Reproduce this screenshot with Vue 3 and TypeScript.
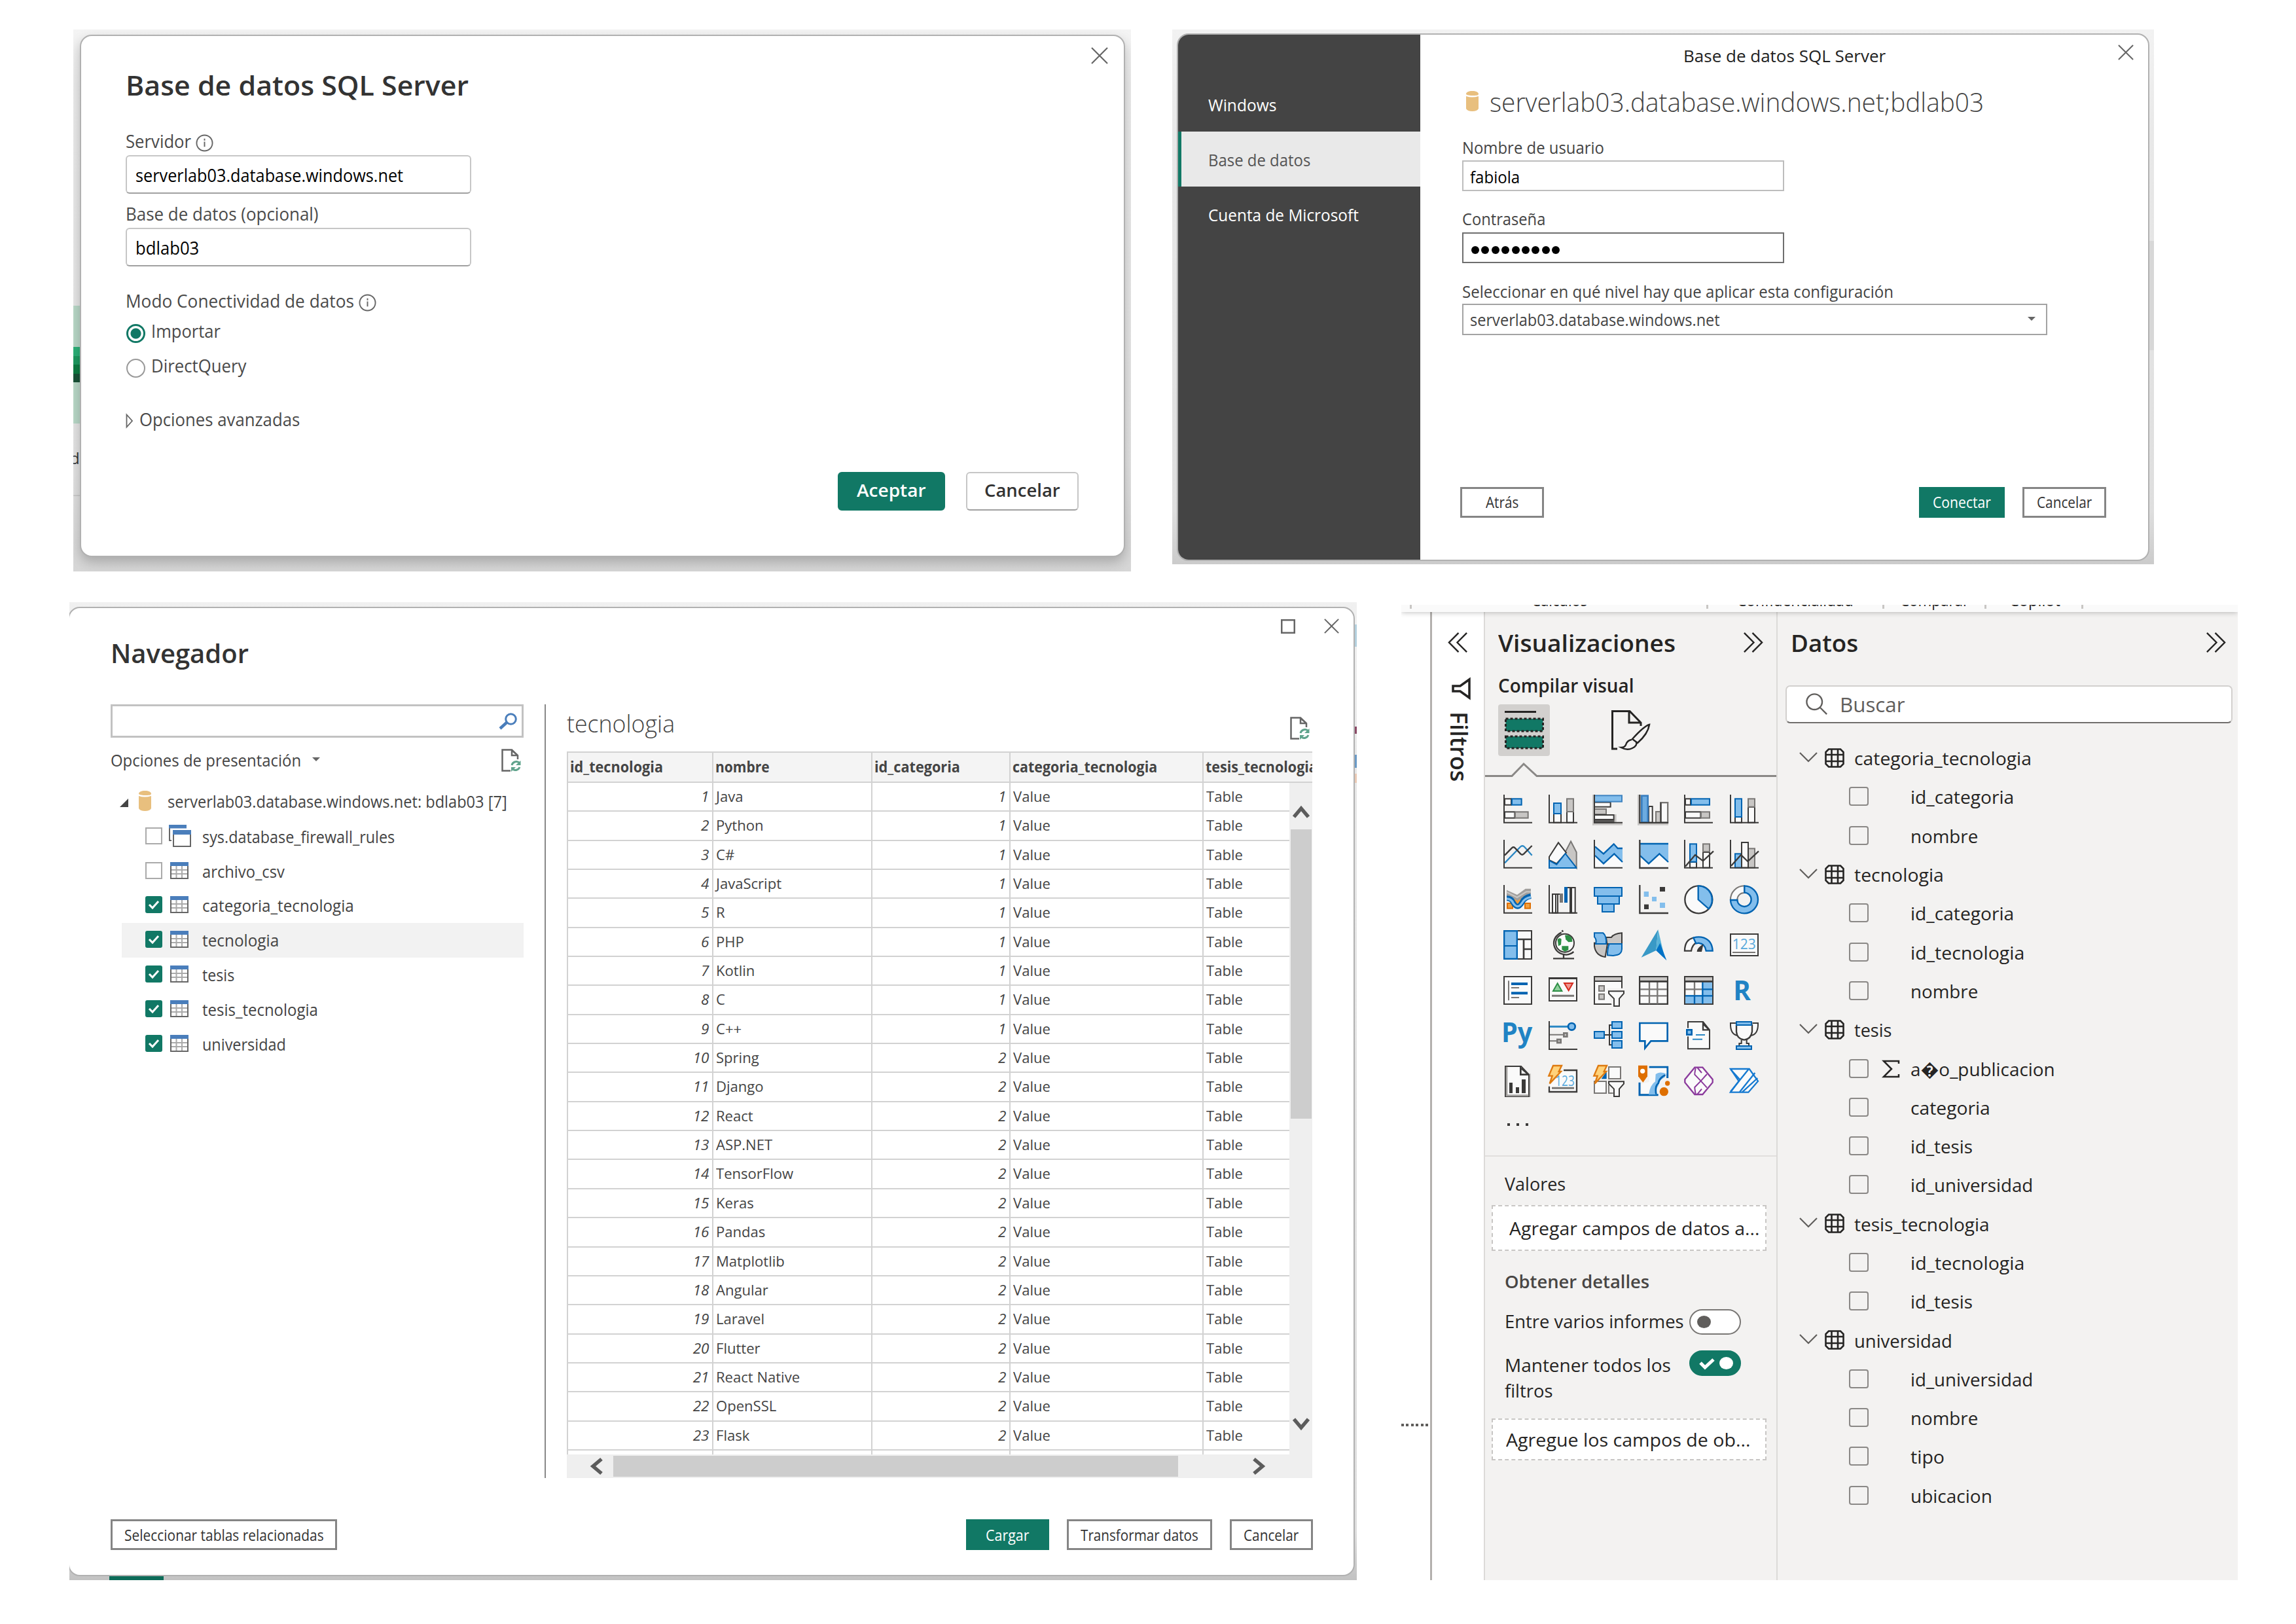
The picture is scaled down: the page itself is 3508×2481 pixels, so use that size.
<script setup lang="ts">
import type { Directive } from 'vue'

// Stretches a label horizontally so that it takes exactly the given width.
const vFit: Directive<HTMLElement, number> = {
  mounted(el, { value }) {
    const natural = el.offsetWidth
    if (!natural || !value) return
    el.style.transform = `scaleX(${(value / natural).toFixed(4)})`
    el.style.marginRight = `${(value - natural).toFixed(1)}px`
  },
}

const K = '#3b3a39'
const B = '#0063b1'
const L = '#83beec'
const G = '#c8c6c4'
const S = '#797775'
const W = '#fafafa'
const O = '#de6f00'

const box = (x1: number, y1: number, x2: number, y2: number, fill: string, stroke: string, sw = 6) =>
  `<rect x="${x1 + sw / 2}" y="${y1 + sw / 2}" width="${x2 - x1 - sw}" height="${y2 - y1 - sw}" fill="${fill}" stroke="${stroke}" stroke-width="${sw}"/>`
const solid = (x1: number, y1: number, x2: number, y2: number, fill: string) =>
  `<rect x="${x1}" y="${y1}" width="${x2 - x1}" height="${y2 - y1}" fill="${fill}"/>`
const line = (d: string, stroke: string, sw = 6, fill = 'none') =>
  `<path d="${d}" fill="${fill}" stroke="${stroke}" stroke-width="${sw}"/>`
const area = (d: string, fill: string) => `<path d="${d}" fill="${fill}"/>`
const axes = line('M6 3V131.5H135', K)
const shift = (s: string) => `<g transform="translate(3 0)">${s}</g>`
const num = (x: number, y: number, size: number, len: number) =>
  `<text x="${x}" y="${y}" font-size="${size}" textLength="${len}" lengthAdjust="spacingAndGlyphs" fill="#58a9dc" font-family="Open Sans, Noto Sans, sans-serif">123</text>`
const bolt =
  area('M22 2H66L54 28H66L10 87L20 52H4L22 2Z', '#ffd27a') + line('M24 3H63L50 30H60L8 85L20 50H4L24 3Z', '#de7a10', 7)
const funnel = line('M72 76H141V86L120 110V144H96V110L72 86Z', K, 6, W)

const icons: string[] = [
  // stacked and clustered bars
  box(6, 19, 42, 53, W, K) + box(39, 19, 89, 53, L, B) + box(6, 79, 58, 113, W, K) + box(54, 79, 119, 113, G, S) + axes,
  box(24, 87, 63, 134, W, K) + box(24, 39, 63, 93, L, B) + box(84, 78, 120, 134, W, K) + box(84, 19, 120, 84, G, S) + axes,
  solid(-3, 3, 3, 143, G) + solid(-3, 134, 135, 143, G) + box(3, 35, 83, 62, W, K) + box(3, 66, 63, 96, G, S) + solid(98, 93, 107, 134, G) + box(3, 93, 98, 120, W, K) + solid(3, 119, 98, 134, '#5a5958') + box(3, 4, 135, 38, L, '#3f84c1') + axes,
  solid(-3, 3, 3, 143, G) + solid(-3, 134, 138, 143, G) + box(45, 54, 68, 134, W, K) + box(78, 78, 105, 134, G, S) + box(99, 36, 139, 134, W, S, 7) + line('M104 134V40', K) + box(12, 4, 48, 134, '#6cabe0', '#3a7ebf', 8) + line('M7 3V131.5H138', K, 7),
  box(6, 19, 36, 53, W, K) + box(33, 19, 123, 53, L, B) + box(6, 79, 82, 113, W, K) + box(78, 79, 123, 113, G, S) + axes,
  shift(box(24, 102, 60, 134, W, K) + box(24, 19, 60, 108, L, B) + box(84, 57, 120, 134, W, K) + box(84, 19, 120, 62, G, S) + axes),
  // lines, areas and combos
  line('M9 109L80 36Q90 26 100 36L134 74', '#2b88c4', 7) + line('M9 74L42 40Q49 34 56 40L82 68Q89 74 96 68L134 30', K, 7) + axes,
  line('M105 10L131 60V132L76 66Z', S, 6, G) + line('M6 81L48 16L84 62L40 112L6 96Z', K, 6, W) + line('M6 98L40 116L80 66L130 130V132H6Z', B, 6, L),
  area('M9 75L48 112L97 67L135 105V130H9Z', W) + area('M9 34L48 67L95 22L113 42H135V105L97 67L48 112L9 75Z', L) + line('M9 34L48 67L95 22L113 42H135M9 75L48 112L97 67L135 105', B, 7) + axes,
  area('M9 75L48 112L97 67L138 105V130H9Z', W) + area('M9 20H138V105L97 67L48 112L9 78Z', L) + line('M9 21H138M9 76L48 112L97 67L138 105', B, 7) + line('M7 3V132H138', K, 7),
  box(27, 102, 63, 134, W, K) + box(27, 19, 63, 107, L, B) + box(87, 57, 123, 134, W, K) + box(87, 19, 123, 60, G, S) + line('M9 125L54 72L90 100L138 55', K, 7) + axes,
  shift(box(24, 64, 60, 134, L, B) + box(84, 40, 120, 134, G, S) + box(54, 12, 90, 134, W, K) + line('M9 122L54 72L85 102L135 55', K, 7) + axes),
  // ribbon, waterfall, funnel, scatter, pie, ring
  box(18, 84, 48, 113, '#f0a040', O) + box(99, 84, 129, 113, '#f0a040', O) + solid(50, 62, 86, 90, '#f0a040') + area('M18 26L66 48L104 20H129V46L68 74L18 54Z', '#a19f9d') + line('M18 36L66 60L108 34H129', G, 7) + line('M18 64Q40 64 48 84Q68 118 88 84Q98 60 129 54', B, 24) + line('M18 66Q40 66 48 86Q68 116 88 86Q98 64 129 58', L, 10) + axes,
  box(18, 42, 48, 134, W, K) + line('M45 45H58M36 45V134', K) + solid(54, 42, 69, 84, S) + box(99, 12, 128, 134, W, K) + line('M90 15H105M108 15V132', K) + solid(75, 12, 90, 84, B) + axes,
  box(3, 12, 135, 57, L, B) + box(18, 51, 123, 93, L, B) + box(39, 87, 99, 129, L, B),
  solid(99, 12, 123, 33, K) + solid(26, 33, 48, 57, L) + solid(63, 57, 84, 78, L) + solid(99, 84, 123, 108, L) + solid(27, 92, 48, 114, K) + line('M7 3V132H138', K, 7),
  `<circle cx="70" cy="70" r="63" fill="${W}" stroke="${K}" stroke-width="7"/>` + line('M68 70V7A63 63 0 0 1 116 112Z', B, 7, L),
  shift(line('M69 7A63 63 0 0 0 6 72H37A31 31 0 0 1 69 39Z', S, 6, W) + line('M70 7A63 63 0 1 1 6 72H37A32 32 0 1 0 70 38Z', B, 7, L)),
  // treemap, maps, gauge, card
  box(63, 3, 135, 138, W, K) + line('M66 45H132M96 45V136M96 90H132', K, 8) + box(3, 3, 69, 138, L, B, 7) + line('M3 75H69', B),
  `<circle cx="78" cy="62" r="42" fill="${W}" stroke="${K}" stroke-width="6"/>` + area('M78 26Q100 22 110 40L112 56L94 58L82 46Z', '#2d8f45') + area('M44 46Q54 34 62 44L60 70L48 76Z', '#2d8f45') + area('M64 76H94V94L78 102L64 92Z', '#2d8f45') + line('M64 4L70 10M62 14Q22 34 28 72Q38 112 84 116Q104 114 118 102M72 116V132M24 133H120', K, 7),
  line('M6 62V76Q12 120 56 126L66 66Z', K, 6, G) + line('M60 36H84Q96 18 132 16V66H64Z', K, 6, G) + line('M6 16H46Q62 28 60 66H12Q18 46 6 34Z', B, 6, L) + line('M74 66H132V90Q130 112 112 116L92 120L66 118Q66 84 74 66Z', B, 6, L),
  area('M91 0L14 128L82 96Z', '#3999c6') + area('M91 0L82 96L122 132Z', '#59b4d9') + area('M82 96L100 62L130 142Z', '#0072c6'),
  line('M6 98Q6 46 48 38L60 60Q40 70 36 98Z', K, 7, W) + line('M46 38Q70 30 94 38Q132 52 134 98H104Q100 66 70 62L58 64Z', B, 7, L) + area('M92 66L84 102H62Q60 86 92 66Z', K),
  shift(box(3, 18, 135, 123, W, K) + num(14, 91, 68, 108) + line('M15 105H120', S)),
  // text box, KPI, slicer, table, matrix
  box(3, 6, 135, 138, W, K) + line('M27 28V118M39 60H75M39 105H75', S) + line('M39 42H114M39 85H114', B, 12),
  box(3, 12, 135, 123, W, K) + line('M6 17H132', K, 8) + line('M44 40L64 75H24Z', '#2d8f45', 6, '#8fcf9c') + line('M75 39H114L95 73Z', '#d42a1e', 6, '#f0948e') + line('M18 97H120', S, 9),
  box(3, 6, 135, 138, W, K) + solid(9, 12, 129, 27, G) + line('M3 30H135', K) + box(24, 48, 54, 78, G, S) + box(24, 86, 54, 116, G, S) + area('M62 62H140V140H86Z', '#f3f2f1') + funnel,
  box(3, 6, 138, 138, W, K, 7) + line('M51 30V134M88 30V134M9 67H132M9 97H132', S, 7) + solid(9, 12, 132, 27, G) + line('M3 31H138', K, 8),
  box(3, 6, 138, 138, W, K, 7) + solid(87, 33, 132, 132, L) + solid(9, 93, 132, 132, L) + line('M51 34V96M9 67H88', S, 7) + line('M51 94V134M88 34V134M88 67H134M9 97H134', B, 7) + solid(9, 12, 132, 27, G) + line('M3 31H138', K, 8),
  `<text x="22" y="116" font-size="125" font-weight="700" fill="#2083c4" textLength="80" lengthAdjust="spacingAndGlyphs" font-family="Open Sans, Noto Sans, sans-serif">R</text>`,
  // python, influencers, decomposition, Q&A, narrative, goals
  `<text x="-6" y="101" font-size="125" font-weight="700" fill="#2083c4" textLength="142" lengthAdjust="spacingAndGlyphs" font-family="Open Sans, Noto Sans, sans-serif">Py</text>`,
  line('M9 31H90', '#2b88c4', 9) + line('M9 68H72M9 97H45', S) + `<circle cx="109" cy="31" r="16" fill="${L}" stroke="${B}" stroke-width="8"/>` + box(69, 57, 92, 81, G, S, 8) + box(39, 86, 63, 109, G, S, 8) + line('M6 6V135H135', K),
  line('M54 69H86M90 24H75V115H90', K) + box(3, 51, 54, 87, L, B) + box(84, 6, 135, 42, L, B) + box(84, 51, 135, 87, L, B) + box(84, 93, 135, 132, L, B),
  line('M7 15H134V97H58L31 130V97H7Z', B, 8, W),
  line('M21 9H90L120 46V133H21Z', K, 6, W) + line('M90 9V46H120M92 20L116 44', K, 7) + solid(10, 38, 46, 76, W) + box(12, 42, 42, 72, L, B, 8) + line('M57 69H99M42 89H87', '#2b88c4'),
  shift(line('M30 15H6Q4 66 38 72M106 15H132Q134 66 100 72', K, 6, W) + line('M33 20V54Q36 88 69 92Q100 88 105 54V20', K, 7, W) + line('M56 92V108H46V120M80 92V108H90V120', K, 6) + box(30, 6, 105, 27, L, B) + box(30, 117, 105, 138, L, B)),
  // paginated report, new card, new slicer, azure map, apps, automate
  solid(120, 40, 129, 147, G) + line('M12 6H84L120 44V144H12Z', K, 6, W) + line('M18 8V140H118', '#a19f9d', 8) + line('M82 6V44H120M86 16L116 42', K, 8) + solid(30, 81, 45, 129, K) + solid(60, 102, 75, 129, K) + solid(87, 66, 105, 129, K),
  line('M72 24H132V123H6V98', K, 7, W) + num(34, 95, 68, 88) + line('M18 106H120', S, 9) + bolt,
  box(69, 6, 129, 66, W, S) + box(3, 72, 63, 132, W, S) + area('M62 28V64H38Z', B) + line('M72 90V129H92', S) + funnel + bolt,
  line('M50 10H134V60M6 80V137H92', B, 9) + area('M14 86V128H56Q54 100 76 82Q80 50 96 34L130 40V14H50V78Z', W) + area('M80 42Q98 28 126 40L122 56Q96 66 92 96Q80 108 84 136H48Q54 92 78 76Z', L) + line('M124 46Q96 60 92 84Q76 96 82 134', B, 8) + area('M0 2H42V52L22 80L0 52Z', O) + `<circle cx="20" cy="28" r="11" fill="#fff"/><circle cx="118" cy="122" r="20" fill="${O}"/><circle cx="134" cy="84" r="11" fill="${O}"/>`,
  line('M52 11L7 66V80L52 135H88L134 80V66L88 11Z', '#8b3a9c', 7, W) + line('M52 38L56 14M52 38V44L80 73L108 104M52 108L56 132M52 108V102L80 73L108 42M64 12L84 36M64 134L84 110', '#8b3a9c', 6),
  shift(line('M6 18H92L132 74L88 125H6L44 74Z', '#1579d0', 7, W) + line('M8 22L48 66M6 122L88 20M48 124L118 36M60 124L130 60', '#1579d0', 7)),
]

interface NavItem { name: string; w: number; checked: boolean; view?: boolean; active?: boolean }
const navItems: NavItem[] = [
  { name: 'sys.database_firewall_rules', w: 294, checked: false, view: true },
  { name: 'archivo_csv', w: 126, checked: false },
  { name: 'categoria_tecnologia', w: 232, checked: true },
  { name: 'tecnologia', w: 117, checked: true, active: true },
  { name: 'tesis', w: 49, checked: true },
  { name: 'tesis_tecnologia', w: 177, checked: true },
  { name: 'universidad', w: 128, checked: true },
]

const techs = ['Java', 'Python', 'C#', 'JavaScript', 'R', 'PHP', 'Kotlin', 'C', 'C++', 'Spring', 'Django', 'React', 'ASP.NET',
  'TensorFlow', 'Keras', 'Pandas', 'Matplotlib', 'Angular', 'Laravel', 'Flutter', 'React Native', 'OpenSSL', 'Flask']
const rows = techs.map((name, i) => ({ id: i + 1, name, cat: i < 9 ? 1 : 2 }))

interface Field { name: string; w: number; table?: boolean; sum?: boolean }
const fields: Field[] = [
  { name: 'categoria_tecnologia', w: 271, table: true },
  { name: 'id_categoria', w: 158 },
  { name: 'nombre', w: 103 },
  { name: 'tecnologia', w: 137, table: true },
  { name: 'id_categoria', w: 158 },
  { name: 'id_tecnologia', w: 174 },
  { name: 'nombre', w: 103 },
  { name: 'tesis', w: 57, table: true },
  { name: 'a\uFFFDo_publicacion', w: 221, sum: true },
  { name: 'categoria', w: 122 },
  { name: 'id_tesis', w: 95 },
  { name: 'id_universidad', w: 187 },
  { name: 'tesis_tecnologia', w: 207, table: true },
  { name: 'id_tecnologia', w: 174 },
  { name: 'id_tesis', w: 95 },
  { name: 'universidad', w: 150, table: true },
  { name: 'id_universidad', w: 187 },
  { name: 'nombre', w: 103 },
  { name: 'tipo', w: 52 },
  { name: 'ubicacion', w: 125 },
]
</script>

<template>
  <main class="desk">
    <!-- SQL Server connection -->
    <section class="shot shot-sql">
      <div class="under">
        <i class="u-light"></i><i class="u-g1"></i><i class="u-g2"></i><i class="u-g3"></i><i class="u-g4"></i><i class="u-light"></i>
        <span class="u-text">de</span>
      </div>
      <div class="dialog sql">
        <svg class="close" viewBox="0 0 26 26"><path d="M1 1L25 25M25 1L1 25" /></svg>
        <h1><span v-fit="524" class="t">Base de datos SQL Server</span></h1>
        <div class="label l1"><span v-fit="100" class="t">Servidor</span>
          <svg class="info" viewBox="0 0 28 28"><circle cx="14" cy="14" r="12.5" /><path d="M14 12V20M14 7V10" /></svg>
        </div>
        <div class="field"><span v-fit="409" class="t">serverlab03.database.windows.net</span></div>
        <div class="label l2"><span v-fit="295" class="t">Base de datos (opcional)</span></div>
        <div class="field f2"><span v-fit="97" class="t">bdlab03</span></div>
        <div class="label l3"><span v-fit="349" class="t">Modo Conectividad de datos</span>
          <svg class="info" viewBox="0 0 28 28"><circle cx="14" cy="14" r="12.5" /><path d="M14 12V20M14 7V10" /></svg>
        </div>
        <div class="label radio r1"><i class="dot on"></i><span v-fit="106" class="t">Importar</span></div>
        <div class="label radio r2"><i class="dot"></i><span v-fit="145" class="t">DirectQuery</span></div>
        <div class="label adv">
          <svg viewBox="0 0 12 22"><path d="M1.5 1.5V20.5L10 11Z" /></svg><span v-fit="245" class="t">Opciones avanzadas</span>
        </div>
        <div class="sql-actions">
          <button class="primary"><span v-fit="106" class="t">Aceptar</span></button>
          <button><span v-fit="116" class="t">Cancelar</span></button>
        </div>
      </div>
    </section>

    <!-- Credentials -->
    <section class="shot shot-cred">
      <i class="edge-band"></i>
      <div class="dialog cred">
        <nav>
          <a><span v-fit="104" class="t">Windows</span></a>
          <a class="sel"><span v-fit="156" class="t">Base de datos</span></a>
          <a><span v-fit="230" class="t">Cuenta de Microsoft</span></a>
        </nav>
        <div class="cred-body">
          <svg class="close" viewBox="0 0 26 26"><path d="M1 1L25 25M25 1L1 25" /></svg>
          <div class="cred-title"><span v-fit="309" class="t">Base de datos SQL Server</span></div>
          <div class="cred-head">
            <svg class="cyl" viewBox="0 0 19 31"><path d="M0 4.5C0 2 4 0 9.500 0S19 2 19 4.500S15 7 9.500 7S0 6 0 4.500ZM0 8Q9 11 19 8V27Q17 31 9.500 31T0 27Z" /></svg>
            <span v-fit="755" class="t">serverlab03.database.windows.net;bdlab03</span>
          </div>
          <div class="clabel c1"><span v-fit="217" class="t">Nombre de usuario</span></div>
          <div class="cinput"><span v-fit="76" class="t">fabiola</span></div>
          <div class="clabel c2"><span v-fit="127" class="t">Contraseña</span></div>
          <div class="cinput pass"><i v-for="n in 9" :key="n"></i></div>
          <div class="clabel c3"><span v-fit="659" class="t">Seleccionar en qué nivel hay que aplicar esta configuración</span></div>
          <div class="cselect"><span v-fit="382" class="t">serverlab03.database.windows.net</span><i class="caret"></i></div>
          <div class="cred-actions">
            <button class="sq"><span v-fit="50" class="t">Atrás</span></button>
            <span class="grow"></span>
            <button class="sq green"><span v-fit="89" class="t">Conectar</span></button>
            <button class="sq"><span v-fit="84" class="t">Cancelar</span></button>
          </div>
        </div>
      </div>
    </section>

    <!-- Navigator -->
    <section class="shot shot-nav">
      <i class="base-bar"></i>
      <i class="sliver s1"></i><i class="sliver s2"></i><i class="sliver s3"></i><i class="sliver s4"></i>
      <div class="dialog navi">
        <svg class="maxi" viewBox="0 0 22 22"><path d="M1.250 1.250H20.750V20.750H1.250Z" /></svg>
        <svg class="close" viewBox="0 0 26 26"><path d="M1 1L25 25M25 1L1 25" /></svg>
        <h1><span v-fit="211" class="t">Navegador</span></h1>
        <div class="navi-cols">
          <aside>
            <div class="nsearch">
              <svg viewBox="0 0 28 26"><circle cx="18.500" cy="9.500" r="7.800" fill="none" stroke="#4a7ebb" stroke-width="3" /><path d="M12.500 14.500L2 24" stroke="#4a7ebb" stroke-width="4.500" /></svg>
            </div>
            <div class="nopts">
              <span v-fit="291" class="t">Opciones de presentación</span><i class="caret"></i><span class="grow"></span>
              <svg class="refresh" viewBox="0 0 30 35"><path d="M14 33.500H1.500V1.500H16L25 10V16M16 1.500V10H25M18 4L24 9" fill="none" stroke="#666" stroke-width="2.500" /><path d="M16 25A7 7 0 0 1 27 21M28 28A7 7 0 0 1 18 31.500" fill="none" stroke="#5fa38c" stroke-width="3" /><path d="M29.500 18V25H22ZM15 35V28H22Z" fill="#5fa38c" /></svg>
            </div>
            <div class="nroot">
              <svg class="tri" viewBox="0 0 13 13"><path d="M13 0V13H0Z" fill="#444" /></svg>
              <svg class="cyl" viewBox="0 0 19 31"><path d="M0 4.500C0 2 4 0 9.500 0S19 2 19 4.500S15 7 9.500 7S0 6 0 4.500ZM0 8Q9 11 19 8V27Q17 31 9.500 31T0 27Z" /></svg>
              <span v-fit="519" class="t">serverlab03.database.windows.net: bdlab03 [7]</span>
            </div>
            <div v-for="it in navItems" :key="it.name" class="nrow" :class="{ active: it.active }">
              <i class="cb" :class="{ on: it.checked }"><svg v-if="it.checked" viewBox="0 0 26 26"><path d="M6 13L11 18L20 8" /></svg></i>
              <span class="nicon">
                <svg v-if="it.view" class="vw" width="34" height="34" viewBox="0 0 34 34"><path d="M1 0V24H5" fill="none" stroke="#666" stroke-width="2" /><rect width="27" height="5.500" fill="#4a7ebb" /><rect x="4" y="6" width="30" height="28" fill="#fff" /><rect x="7" y="9" width="26" height="24" fill="#fff" stroke="#666" stroke-width="2" /><rect x="6" y="8" width="28" height="7" fill="#4a7ebb" /></svg>
                <svg v-else width="28" height="26" viewBox="0 0 28 26"><rect x="1" y="1" width="26" height="24" fill="#fff" stroke="#666" stroke-width="2" /><path d="M9.500 6V24M18 6V24M2 12H26M2 18H26" stroke="#aaa" stroke-width="2" /><rect width="28" height="6" fill="#4a7ebb" /></svg>
              </span>
              <span v-fit="it.w" class="t">{{ it.name }}</span>
            </div>
          </aside>
          <div class="preview">
            <div class="phead">
              <span v-fit="165" class="t">tecnologia</span><span class="grow"></span>
              <svg class="refresh" viewBox="0 0 30 35"><path d="M14 33.500H1.500V1.500H16L25 10V16M16 1.500V10H25M18 4L24 9" fill="none" stroke="#666" stroke-width="2.500" /><path d="M16 25A7 7 0 0 1 27 21M28 28A7 7 0 0 1 18 31.500" fill="none" stroke="#5fa38c" stroke-width="3" /><path d="M29.500 18V25H22ZM15 35V28H22Z" fill="#5fa38c" /></svg>
            </div>
            <div class="thead">
              <b><span v-fit="142" class="t">id_tecnologia</span></b><b><span v-fit="83" class="t">nombre</span></b><b><span v-fit="131" class="t">id_categoria</span></b><b><span v-fit="221" class="t">categoria_tecnologia</span></b><b><span v-fit="171" class="t">tesis_tecnologia</span></b>
            </div>
            <div class="tmain">
              <div class="tbody">
                <div v-for="r in rows" :key="r.id" class="tr">
                  <span class="n">{{ r.id }}</span><span><em>{{ r.name }}</em></span><span class="n">{{ r.cat }}</span><span><em>Value</em></span><span><em>Table</em></span>
                </div>
                <div class="tr"><span></span><span></span><span></span><span></span><span></span></div>
              </div>
              <div class="vbar">
                <svg class="up" viewBox="0 0 24 20"><path d="M1 17L12 4L23 17" /></svg>
                <i class="vthumb"></i>
                <svg class="down" viewBox="0 0 24 20"><path d="M1 3L12 16L23 3" /></svg>
              </div>
            </div>
            <div class="hbar">
              <svg class="left" viewBox="0 0 20 24"><path d="M17 1L4 12L17 23" /></svg>
              <i class="hthumb"></i><span class="grow"></span>
              <svg class="right" viewBox="0 0 20 24"><path d="M3 1L16 12L3 23" /></svg>
            </div>
          </div>
        </div>
        <div class="navi-actions">
          <button class="sq b1"><span v-fit="305" class="t">Seleccionar tablas relacionadas</span></button>
          <span class="grow"></span>
          <button class="sq green b2"><span v-fit="66" class="t">Cargar</span></button>
          <button class="sq b3"><span v-fit="180" class="t">Transformar datos</span></button>
          <button class="sq b2"><span v-fit="84" class="t">Cancelar</span></button>
        </div>
      </div>
    </section>

    <!-- Report panes -->
    <section class="panes">
      <div class="ribbon">
        <i class="g0"></i><span v-fit="85" class="t">Cálculos</span><i class="g1"></i><span v-fit="178" class="t">Confidencialidad</span><i class="g2"></i><span v-fit="105" class="t">Comparar</span><i class="g3"></i><span v-fit="78" class="t">Copilot</span><i class="g4"></i>
      </div>
      <div class="pane-row">
        <div class="canvas"><i></i></div>
        <div class="filters">
          <svg class="chev2" viewBox="0 0 32 32"><path d="M17 1L2 16L17 31M30 1L15 16L30 31" /></svg>
          <svg class="funnel" viewBox="0 0 30 32"><path d="M27 2V30L13 20H2V12H13Z" /></svg>
          <span class="vert">Filtros</span>
        </div>
        <div class="viz">
          <div class="pane-title">
            <span v-fit="271" class="t">Visualizaciones</span><span class="grow"></span>
            <svg class="chev2" viewBox="0 0 32 32"><path d="M2 1L17 16L2 31M15 1L30 16L15 31" /></svg>
          </div>
          <div class="pane-sub"><span v-fit="207" class="t">Compilar visual</span></div>
          <div class="modes">
            <span class="mode on">
              <svg width="60" height="62" viewBox="0 0 60 62"><path d="M0 2.500H48" stroke="#252423" stroke-width="3" /><g fill="#117865" stroke="#252423" stroke-width="3" stroke-dasharray="4 3"><rect x="1.500" y="13" width="57" height="19" /><rect x="1.500" y="40" width="57" height="18" /></g></svg>
            </span>
            <svg class="fmt" width="62" height="62" viewBox="0 0 62 62" fill="none" stroke="#252423" stroke-width="3"><path d="M9 59H1.500V1.500H28L45 19V24M27 2V19H45" /><path d="M58 22Q50 24 32 44L40 50Q56 36 58 22ZM31 45Q24 46 22 53Q20 57 15 57Q24 62 32 58Q40 54 38 49" stroke-width="2.500" /></svg>
          </div>
          <svg class="notch" width="445" height="22" viewBox="0 0 445 22"><path d="M0 20.500H41L59 2L79 20.500H445" fill="none" stroke="#8a8886" stroke-width="3" /></svg>
          <div class="gallery">
            <svg v-for="(ic, i) in icons" :key="i" viewBox="0 0 150 150" v-html="ic"></svg>
          </div>
          <div class="more"><i></i><i></i><i></i></div>
          <div class="wells">
            <div class="wl w1"><span v-fit="93" class="t">Valores</span></div>
            <div class="drop d1"><span v-fit="382" class="t">Agregar campos de datos a...</span></div>
            <div class="wl w2"><span v-fit="221" class="t">Obtener detalles</span></div>
            <div class="wl w3"><span v-fit="274" class="t">Entre varios informes</span><i class="toggle"><b></b></i></div>
            <div class="wl w4">
              <div><span v-fit="254" class="t">Mantener todos los</span><br><span v-fit="73" class="t">filtros</span></div>
              <i class="toggle on"><svg width="24" height="18" viewBox="0 0 24 18"><path d="M2 8L9 15L22 3" fill="none" stroke="#fff" stroke-width="5" /></svg><b></b></i>
            </div>
            <div class="drop d2"><span v-fit="374" class="t">Agregue los campos de ob...</span></div>
          </div>
        </div>
        <div class="data">
          <div class="pane-title">
            <span v-fit="103" class="t">Datos</span><span class="grow"></span>
            <svg class="chev2" viewBox="0 0 32 32"><path d="M2 1L17 16L2 31M15 1L30 16L15 31" /></svg>
          </div>
          <div class="dsearch">
            <svg viewBox="0 0 36 36"><circle cx="14" cy="14" r="12.500" /><path d="M23 23L34 34" /></svg>
            <span v-fit="100" class="t">Buscar</span>
          </div>
          <div v-for="(f, i) in fields" :key="i" class="frow" :class="{ table: f.table }">
            <template v-if="f.table">
              <svg class="chev" viewBox="0 0 28 18"><path d="M1 2L14 15L27 2" /></svg>
              <svg class="grid" viewBox="0 0 30 30"><path d="M6 1.500H24L28.500 6V24L24 28.500H6L1.500 24V6ZM10.500 1V29M20 1V29M1 10H29M1 20H29" /></svg>
            </template>
            <template v-else>
              <i class="fcb"></i>
              <span class="sum"><svg v-if="f.sum" width="27" height="28" viewBox="0 0 27 28"><path d="M25 6V2H2L14 14L2 26H25V22" /></svg></span>
            </template>
            <span v-fit="f.w" class="t">{{ f.name }}</span>
          </div>
        </div>
      </div>
    </section>
  </main>
</template>

<style>
body { background: #fff; }
</style>

<style scoped>
* { box-sizing: border-box; }
.desk { position: relative; width: 3508px; height: 2481px; overflow: hidden; background: #fff; font-family: "Open Sans", "Noto Sans", "DejaVu Sans", sans-serif; color: #444; }
.t { display: inline-block; white-space: pre; transform-origin: 0 50%; flex: none; }
.grow { flex: 1; }
h1 { margin: 0; font-weight: 600; color: #333; }
i, em { font-style: normal; }
button { font: inherit; padding: 0; display: flex; align-items: center; justify-content: center; }
svg { display: block; flex: none; overflow: visible; }
.shot { position: absolute; overflow: hidden; }
.dialog { position: absolute; background: #fff; border: 2px solid #b1b1b1; border-radius: 18px; overflow: hidden; display: flex; flex-direction: column; }
.close { position: absolute; fill: none; stroke: #666; stroke-width: 2.2; }

/* SQL Server connection */
.shot-sql { left: 112px; top: 45px; width: 1616px; height: 828px; background: linear-gradient(#f4f4f4, #ececec 10%, #e4e4e4 80%, #d6d6d6); }
.shot-sql .dialog { box-shadow: 0 8px 18px rgba(0, 0, 0, .22); }
.under { position: absolute; left: 0; top: 422px; width: 14px; overflow: hidden; }
.under i { display: block; height: 13.500px; }
.under .u-light { height: 63px; background: #b9d9c8; }
.u-g1 { background: #2cb178; } .u-g2 { background: #1d9a60; } .u-g3 { background: #0d7c42; } .u-g4 { background: #185237; }
.u-text { display: block; margin: 36px 0 0 -5px; font-size: 24px; color: #333; border-bottom: 2px solid #ccc; padding-bottom: 40px; }
.sql { left: 10px; top: 8px; width: 1597px; height: 798px; padding-left: 68px; font-size: 27px; line-height: 34px; }
.sql .close { right: 24px; top: 17px; width: 26px; height: 26px; }
.sql h1 { margin-top: 50px; font-size: 42px; line-height: 50px; }
.label { display: flex; align-items: center; height: 34px; color: #4a4a4a; }
.info { width: 27px; height: 27px; margin: 4px 0 0 7px; fill: none; stroke: #666; stroke-width: 2; }
.l1 { margin-top: 44px; }
.field { margin-top: 4px; width: 528px; height: 59px; border: 2px solid #c6c6c6; border-bottom-color: #a0a0a0; border-radius: 6px; padding: 2px 0 0 13px; display: flex; align-items: center; color: #000; }
.l2 { margin-top: 14px; }
.l3 { margin-top: 36px; }
.r1 { margin-top: 12px; }
.r2 { margin-top: 19px; }
.dot { width: 29px; height: 29px; border: 2px solid #999; border-radius: 50%; margin: 6px 9px 0 1px; flex: none; }
.dot.on { border: 3px solid #117865; background: radial-gradient(circle, #117865 7.500px, #fff 8.500px); }
.adv { margin-top: 48px; }
.adv svg { width: 12px; height: 22px; margin: 3px 9px 0 0; fill: none; stroke: #666; stroke-width: 1.800; }
.sql-actions { display: flex; justify-content: flex-end; gap: 32px; margin: 63px 69px 0 0; font-weight: 600; }
.sql-actions button { width: 172px; height: 59px; border: 2px solid #c6c6c6; border-bottom-color: #a0a0a0; border-radius: 6px; background: #fff; color: #333; padding-bottom: 3px; }
.sql-actions .primary { width: 164px; background: #117865; border-color: #117865; color: #fff; }

/* Credentials */
.shot-cred { left: 1791px; top: 45px; width: 1500px; height: 817px; background: linear-gradient(#f2f2f2, #e8e8e8 20%, #dedede 90%, #cbcbcb); }
.edge-band { position: absolute; right: 0; top: 323px; width: 10px; height: 167px; background: #d7d7d7; }
.cred { left: 7px; top: 6px; width: 1486px; height: 806px; flex-direction: row; }
nav { width: 370px; background: #444; padding-top: 64px; font-size: 25px; color: #fff; flex: none; }
nav a { display: flex; align-items: center; height: 84px; padding: 2px 0 0 46px; }
nav .sel { background: #e9e9e9; color: #555; border-left: 5px solid #117865; padding-left: 41px; }
.cred-body { flex: 1; padding-left: 64px; font-size: 25px; line-height: 32px; color: #444; display: flex; flex-direction: column; }
.cred .close { right: 22px; top: 15px; width: 24px; height: 24px; }
.cred-title { margin: 16px 0 0 338px; font-size: 26px; color: #222; }
.cred-head { display: flex; align-items: center; margin-top: 26px; height: 56px; font-size: 41px; font-weight: 300; color: #444; }
.cyl { width: 19px; height: 31px; fill: #e8bf7e; }
.cred-head .cyl { margin: -2px 17px 0 6px; }
.clabel { height: 32px; }
.c1 { margin-top: 26px; }
.cinput { margin-top: 4px; width: 492px; height: 47px; border: 2px solid #bdbdbd; color: #000; display: flex; align-items: center; padding: 2px 0 0 10px; }
.c2 { margin-top: 26px; }
.pass { margin-top: 5px; border-color: #6e6e6e; gap: 3.400px; padding: 7px 0 0 12px; }
.pass i { width: 12px; height: 12px; border-radius: 50%; background: #000; }
.c3 { margin-top: 27px; }
.cselect { margin-top: 3px; width: 894px; height: 48px; border: 2px solid #a3a3a3; display: flex; align-items: center; padding: 0 16px 0 10px; justify-content: space-between; }
.caret { border: 6px solid transparent; border-top-color: #666; border-bottom: 0; margin-top: -2px; }
.cred-actions { display: flex; margin: 232px 64px 0 -3px; }
.sq { height: 47px; border: 3px solid #858585; background: #fff; color: #333; font-size: 24px; flex: none; padding-bottom: 1px; }
.sq.green { background: #117865; border-color: #117865; color: #fff; }
.cred-actions .sq { width: 128px; }
.cred-actions .green { width: 131px; margin-right: 27px; }

/* Navigator */
.shot-nav { left: 106px; top: 920px; width: 1967px; height: 1494px; background: linear-gradient(#f0f0f0, #e6e6e6 20%, #dedede 95%, #c2c2c2); }
.base-bar { position: absolute; left: 61px; bottom: 0; width: 83px; height: 8px; background: #0c6b58; }
.sliver { position: absolute; right: 0; width: 4px; }
.s1 { top: 34px; height: 34px; background: #b3d0de; }
.s2 { top: 190px; height: 11px; background: #8b4a66; }
.s3 { top: 233px; height: 20px; background: #6a9ac6; }
.s4 { top: 262px; height: 14px; background: #eac9b4; }
.navi { left: -2px; top: 7px; width: 1966px; height: 1481px; padding-left: 63px; }
.navi .close { right: 22px; top: 16px; width: 23px; height: 23px; }
.maxi { position: absolute; right: 89px; top: 17px; width: 22px; height: 22px; fill: none; stroke: #666; stroke-width: 2.500; }
.navi h1 { margin-top: 44px; padding-left: 0; font-size: 40px; line-height: 50px; }
.navi-cols { display: flex; margin-top: 53px; height: 1182px; }
aside { width: 665px; border-right: 2px solid #888; font-size: 26px; color: #444; }
.nsearch { width: 631px; height: 51px; border: 3px solid #c2c2c2; display: flex; justify-content: flex-end; align-items: center; padding-right: 7px; }
.nsearch svg { width: 28px; height: 26px; }
.nopts { display: flex; align-items: center; width: 627px; height: 68px; margin-top: 0; }
.nopts .caret { margin-left: 17px; }
.refresh { width: 30px; height: 35px; }
.nroot { display: flex; align-items: center; height: 57px; }
.nroot .tri { width: 13px; height: 13px; margin: 6px 16px 0 14px; }
.nroot .t { margin-left: 25px; }
.nrow { display: flex; align-items: center; height: 52.800px; margin-left: 17px; width: 614px; padding-left: 36px; }
.nrow.active { background: #f2f2f2; }
.cb { width: 26px; height: 26px; border: 2px solid #aaa; background: #fff; margin-bottom: 3px; flex: none; }
.cb.on { border: 0; border-radius: 3px; background: #117865; }
.cb svg { fill: none; stroke: #fff; stroke-width: 3; }
.nicon { width: 61px; padding-left: 12px; margin-bottom: 3px; flex: none; }
.vw { margin-left: -2px; }
.nrow .t { margin-top: -1px; }
.preview { margin-left: 32px; width: 1139px; }
.phead { display: flex; align-items: center; height: 72px; padding-right: 4px; font-size: 37px; font-weight: 300; color: #444; }
.phead .t { margin-top: -16px; }
.thead { display: flex; height: 48px; overflow: hidden; background: #f4f4f4; border: 2px solid #d2d2d2; border-right: 0; }
.thead b { font-size: 23px; font-weight: 700; color: #444; padding: 6px 0 0 3px; line-height: 30px; border-right: 2px solid #d2d2d2; flex: none; }
.thead b:nth-child(1) { width: 221.500px; }
.thead b:nth-child(2) { width: 243px; }
.thead b:nth-child(3) { width: 211px; }
.thead b:nth-child(4) { width: 295px; }
.thead b:nth-child(5) { border: 0; }
.tmain { display: flex; height: 1026px; overflow: hidden; }
.tbody { width: 1104px; border-left: 2px solid #d2d2d2; overflow: hidden; }
.tr { display: flex; height: 44.350px; border-bottom: 2px solid #d2d2d2; font-size: 22.500px; line-height: 41px; color: #444; }
.tr span { border-right: 2px solid #d2d2d2; padding-left: 4px; flex: none; }
.tr span:nth-child(1) { width: 221.500px; }
.tr span:nth-child(2) { width: 243px; }
.tr span:nth-child(3) { width: 211px; }
.tr span:nth-child(4) { width: 295px; }
.tr span:nth-child(5) { border: 0; }
.tr .n { text-align: right; font-style: italic; padding-right: 4px; }
.tr em { display: inline-block; transform: scaleX(.98); transform-origin: 0 50%; }
.vbar { width: 35px; background: #efefef; padding: 35px 2px 0; display: flex; flex-direction: column; align-items: center; }
.vbar svg, .hbar svg { fill: none; stroke: #5c5c5c; stroke-width: 5.500; }
.up, .down { width: 24px; height: 20px; }
.vthumb { width: 32px; height: 442px; background: #cdcdcd; margin-top: 16px; }
.down { margin-top: 456px; }
.hbar { display: flex; align-items: center; height: 36px; background: #efefef; padding: 0 72px 0 36px; }
.left, .right { width: 20px; height: 24px; }
.hthumb { width: 863px; height: 32px; background: #cdcdcd; margin-left: 15px; }
.navi-actions { display: flex; margin: 63px 62px 0 0; gap: 27px; }
.b1 { width: 346px; } .b2 { width: 127px; } .b3 { width: 222px; }

/* Report panes */
.panes { position: absolute; left: 2141px; top: 924px; width: 1278px; height: 1490px; background: #f3f2f1; overflow: hidden; display: flex; flex-direction: column; color: #252423; }
.ribbon { height: 11px; background: #fafafa; display: flex; font-size: 26px; line-height: 24px; overflow: hidden; flex: none; z-index: 1; box-shadow: 0 0 8px rgba(0, 0, 0, .3); }
.ribbon .t { margin-top: -20px; }
.ribbon i { border-left: 3px solid #c8c6c4; height: 6px; }
.g0 { width: 186px; margin-left: 13px; } .g1 { width: 47px; margin-left: 182px; } .g2 { width: 27px; margin-left: 44px; } .g3 { width: 38px; margin-left: 24px; } .g4 { margin-left: 32px; }
.pane-row { flex: 1; display: flex; }
.canvas { width: 47px; background: #fff; border-right: 3px solid #b3b0ad; padding-top: 1240px; flex: none; }
.canvas i { display: block; height: 4px; background: repeating-linear-gradient(90deg, #605e5c 0 4px, transparent 4px 7.500px); }
.filters { width: 79px; background: #fff; display: flex; flex-direction: column; align-items: center; padding-top: 31px; flex: none; }
.chev2 { width: 31px; height: 31px; fill: none; stroke: #252423; stroke-width: 2.500; }
.funnel { width: 30px; height: 32px; margin: 39px 0 0 10px; fill: none; stroke: #252423; stroke-width: 3.500; }
.vert { writing-mode: vertical-rl; font-size: 36px; font-weight: 600; line-height: 40px; margin: 19px 0 0 2px; letter-spacing: -.2px; }
.viz { width: 449px; border: solid #dcdad8; border-width: 0 2px; flex: none; display: flex; flex-direction: column; }
.pane-title { display: flex; align-items: center; height: 60px; margin-top: 17px; padding: 0 20px; font-size: 36px; font-weight: 600; flex: none; }
.data .pane-title { padding-right: 18px; }
.pane-title .chev2 { margin-bottom: 1px; }
.pane-sub { margin: 16px 0 0 20px; font-size: 28px; line-height: 38px; font-weight: 600; }
.modes { display: flex; margin: 10px 0 0 20px; height: 79px; }
.mode.on { width: 79px; height: 79px; background: #d2d0ce; border-radius: 4px; padding: 9px 0 0 10px; }
.fmt { margin: 9px 0 0 94px; }
.notch { margin-top: 10px; }
.gallery { display: grid; grid-template-columns: repeat(6, 69px); grid-auto-rows: 69px; margin: 26px 0 0 27px; }
.gallery svg { width: 50px; height: 50px; }
.more { display: flex; gap: 10px; margin: 20px 0 0 34px; }
.more i { width: 4px; height: 4px; background: #3b3a39; }
.wells { border-top: 2px solid #e1dfdd; margin-top: 45px; flex: 1; font-size: 27px; line-height: 38px; }
.wl { padding-left: 30px; display: flex; height: 38px; }
.w1 { margin-top: 23px; }
.drop { margin-left: 10px; width: 420px; border: 2px dashed #c8c6c4; background: #fff; display: flex; align-items: center; }
.d1 { height: 70px; margin-top: 13px; padding: 2px 0 0 25px; }
.w2 { margin-top: 28px; font-weight: 600; color: #484644; }
.w3 { margin-top: 23px; }
.w4 { margin-top: 28px; height: 78px; line-height: 39px; }
.w4 div { width: 281px; }
.toggle { width: 79px; height: 39px; border: 2px solid #797775; border-radius: 20px; background: #fff; margin-left: 8px; display: flex; align-items: center; padding-left: 10px; }
.toggle b { width: 21px; height: 19px; border-radius: 50%; background: #605e5c; }
.w4 .toggle { margin: -3px 0 0 1px; background: #117865; border-color: #117865; padding-left: 13px; gap: 7px; }
.toggle.on b { background: #fff; }
.d2 { height: 64px; margin-top: 23px; padding: 2px 0 0 20px; }
.data { flex: 1; padding-left: 0; }
.dsearch { margin: 35px 0 24px 12px; width: 683px; height: 58px; border: 2px solid #d2d0ce; border-bottom-color: #706e6c; border-radius: 7px; background: #fff; display: flex; align-items: center; padding-left: 29px; font-size: 31px; color: #605e5c; }
.dsearch svg { width: 34px; height: 34px; margin-right: 18px; fill: none; stroke: #605e5c; stroke-width: 2.500; }
.frow { display: flex; align-items: center; height: 59.300px; padding-left: 109px; font-size: 28px; color: #252423; }
.frow .t { margin-top: -1px; }
.frow.table { padding-left: 33px; }
.chev { width: 28px; height: 18px; margin: 0 11px 4px 0; fill: none; stroke: #605e5c; stroke-width: 2.200; }
.grid { width: 30px; height: 30px; margin: 0 15px 2px 0; fill: none; stroke: #252423; stroke-width: 2.600; }
.fcb { width: 30px; height: 29px; border: 2px solid #8a8886; border-radius: 4px; margin-bottom: 2px; flex: none; }
.sum { width: 64px; padding-left: 21px; flex: none; }
.sum svg { fill: none; stroke: #252423; stroke-width: 2.500; }
</style>
